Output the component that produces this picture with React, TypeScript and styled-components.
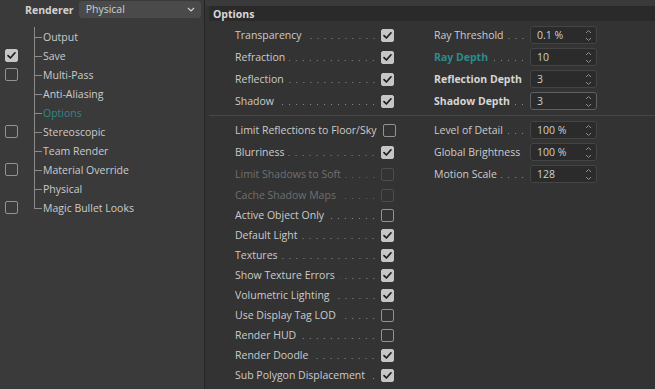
import React from 'react';
import styled, { createGlobalStyle } from 'styled-components';

const Global = createGlobalStyle`
  html, body { margin: 0; padding: 0; background: #333333; }
  body {
    font-family: "Open Sans", "Noto Sans", "DejaVu Sans", sans-serif;
    font-size: 10.5px;
    color: #cbcbcb;
  }
  * { box-sizing: border-box; }
`;

const Window = styled.div`
  width: 655px;
  height: 389px;
  display: flex;
  overflow: hidden;
  background: #333333;
`;

/* ---------- Sidebar ---------- */

const Sidebar = styled.aside`
  width: 205px;
  flex-shrink: 0;
  background: #3a3a3a;
  border-right: 1px solid #262626;
  display: flex;
  flex-direction: column;
`;

const RendererBar = styled.div`
  height: 19px;
  flex-shrink: 0;
  display: flex;
  align-items: center;
  padding: 0 0 0 25px;
  gap: 5px;
`;

const BarLabel = styled.span`
  font-weight: 700;
  color: #d2d2d2;
`;

const Dropdown = styled.div`
  width: 122px;
  height: 17px;
  margin-top: -1px;
  border-radius: 3px;
  background: #4a4a4a;
  display: flex;
  align-items: center;
  justify-content: space-between;
  padding: 0 6px 0 7px;
  color: #d0d0d0;
`;

const Tree = styled.ul`
  list-style: none;
  margin: 8px 0 0;
  padding: 0;
  flex-shrink: 0;
`;

const TreeRow = styled.li`
  height: 19px;
  display: grid;
  grid-template-columns: 34px 9px 1fr;
  align-items: center;
`;

const TreeCheckSlot = styled.div`
  padding-left: 5px;
  display: flex;
  align-items: center;
`;

const Connector = styled.div<{ $last?: boolean }>`
  position: relative;
  height: 100%;
  &::before {
    content: "";
    position: absolute;
    left: 0;
    top: 0;
    width: 1px;
    height: ${(p) => (p.$last ? '50%' : '100%')};
    background: #8a8a8a;
  }
  &::after {
    content: "";
    position: absolute;
    left: 0;
    top: 50%;
    width: 8px;
    height: 1px;
    background: #8a8a8a;
  }
`;

const TreeLabel = styled.span<{ $active?: boolean }>`
  color: ${(p) => (p.$active ? '#2f8787' : '#cbcbcb')};
  white-space: nowrap;
`;

/* ---------- Checkbox ---------- */

const Box = styled.span<{ $checked?: boolean; $disabled?: boolean }>`
  width: 13px;
  height: 13px;
  flex-shrink: 0;
  border-radius: 2px;
  display: inline-flex;
  align-items: center;
  justify-content: center;
  background: ${(p) => (p.$checked ? '#c6c6c6' : 'transparent')};
  border: 1px solid
    ${(p) => (p.$checked ? '#c6c6c6' : p.$disabled ? '#4e4e4e' : '#929292')};
`;

const Checkbox = ({ checked, disabled }: { checked?: boolean; disabled?: boolean }) => (
  <Box $checked={checked} $disabled={disabled}>
    {checked && (
      <svg width="11" height="11" viewBox="0 0 11 11">
        <path d="M2 5.6 L4.4 8 L9 2.8" fill="none" stroke="#1c1c1c" strokeWidth="1.7" strokeLinecap="round" strokeLinejoin="round" />
      </svg>
    )}
  </Box>
);

/* ---------- Main ---------- */

const Main = styled.main`
  flex: 1;
  min-width: 0;
  display: flex;
  flex-direction: column;
  padding-left: 4px;
  & > * { flex-shrink: 0; }
`;

const TopStrip = styled.div`
  height: 6px;
  margin-left: -4px;
  background: #3a3a3a;
`;

const GroupHeader = styled.div`
  height: 15px;
  background: #2a2a2a;
  display: flex;
  align-items: center;
  padding-left: 4px;
  font-weight: 700;
  color: #d8d8d8;
`;

const Section = styled.section<{ $divided?: boolean; $tallRows: number }>`
  display: grid;
  grid-template-columns: 159px 163px;
  grid-template-rows: repeat(${(p) => p.$tallRows}, 22px);
  grid-auto-rows: 20px;
  column-gap: 40px;
  padding: 3px 0 3px 26px;
  border-top: ${(p) => (p.$divided ? '1px solid #474747' : 'none')};
`;

const Cell = styled.div`
  display: flex;
  align-items: center;
  min-width: 0;
`;

const Label = styled.span<{ $tone?: 'normal' | 'dim' | 'bold' | 'accent' }>`
  white-space: nowrap;
  font-weight: ${(p) => (p.$tone === 'bold' || p.$tone === 'accent' ? 700 : 400)};
  color: ${(p) =>
    p.$tone === 'dim'
      ? '#707070'
      : p.$tone === 'accent'
      ? '#2b8c8c'
      : p.$tone === 'bold'
      ? '#d6d6d6'
      : '#cbcbcb'};
`;

const Leader = styled.span<{ $dim?: boolean }>`
  flex: 1;
  min-width: 0;
  height: 1px;
  margin: 6px 6px 0 0;
  background-image: linear-gradient(
    to right,
    ${(p) => (p.$dim ? '#686868' : '#8c8c8c')} 1px,
    transparent 1px
  );
  background-size: 7px 1px;
  background-repeat: repeat-x;
  background-position: right 2px center;
  mask-image: linear-gradient(to right, transparent 4px, #000 4px);
  -webkit-mask-image: linear-gradient(to right, transparent 4px, #000 4px);
`;

const Field = styled.div<{ $focused?: boolean }>`
  width: 67px;
  height: 18px;
  flex-shrink: 0;
  border-radius: 3px;
  background: #2b2b2b;
  border: 1px solid ${(p) => (p.$focused ? '#606060' : '#444444')};
  display: flex;
  align-items: center;
  justify-content: space-between;
  padding: 0 4px 0 6px;
  color: #cfcfcf;
`;

const Spinner = () => (
  <svg width="7" height="13" viewBox="0 0 7 13">
    <path d="M1 4 L3.5 1.5 L6 4" fill="none" stroke="#8f8f8f" strokeWidth="1" />
    <path d="M1 9 L3.5 11.5 L6 9" fill="none" stroke="#8f8f8f" strokeWidth="1" />
  </svg>
);

type Check = { label: string; checked?: boolean; disabled?: boolean };
type Num = { label: string; value: string; tone?: 'normal' | 'bold' | 'accent'; focused?: boolean };

const CheckItem = ({ item }: { item: Check }) => (
  <Cell>
    <Label $tone={item.disabled ? 'dim' : 'normal'}>{item.label}</Label>
    <Leader $dim={item.disabled} />
    <Checkbox checked={item.checked} disabled={item.disabled} />
  </Cell>
);

const NumItem = ({ item }: { item?: Num }) =>
  item ? (
    <Cell>
      <Label $tone={item.tone}>{item.label}</Label>
      <Leader />
      <Field $focused={item.focused}>
        <span>{item.value}</span>
        <Spinner />
      </Field>
    </Cell>
  ) : (
    <Cell />
  );

const tree = [
  { label: 'Output', box: false },
  { label: 'Save', box: true, checked: true },
  { label: 'Multi-Pass', box: true },
  { label: 'Anti-Aliasing', box: false },
  { label: 'Options', box: false, active: true },
  { label: 'Stereoscopic', box: true },
  { label: 'Team Render', box: false },
  { label: 'Material Override', box: true },
  { label: 'Physical', box: false },
  { label: 'Magic Bullet Looks', box: true },
];

const section1: [Check, Num][] = [
  [{ label: 'Transparency', checked: true }, { label: 'Ray Threshold', value: '0.1 %' }],
  [{ label: 'Refraction', checked: true }, { label: 'Ray Depth', value: '10', tone: 'accent' }],
  [{ label: 'Reflection', checked: true }, { label: 'Reflection Depth', value: '3', tone: 'bold' }],
  [{ label: 'Shadow', checked: true }, { label: 'Shadow Depth', value: '3', tone: 'bold', focused: true }],
];

const section2: [Check, Num?][] = [
  [{ label: 'Limit Reflections to Floor/Sky' }, { label: 'Level of Detail', value: '100 %' }],
  [{ label: 'Blurriness', checked: true }, { label: 'Global Brightness', value: '100 %' }],
  [{ label: 'Limit Shadows to Soft', disabled: true }, { label: 'Motion Scale', value: '128' }],
  [{ label: 'Cache Shadow Maps', disabled: true }],
  [{ label: 'Active Object Only' }],
  [{ label: 'Default Light', checked: true }],
  [{ label: 'Textures', checked: true }],
  [{ label: 'Show Texture Errors', checked: true }],
  [{ label: 'Volumetric Lighting', checked: true }],
  [{ label: 'Use Display Tag LOD' }],
  [{ label: 'Render HUD' }],
  [{ label: 'Render Doodle', checked: true }],
  [{ label: 'Sub Polygon Displacement', checked: true }],
  [{ label: 'Post Effects', checked: true }],
];

export default function App() {
  return (
    <>
      <Global />
      <Window>
        <Sidebar>
          <RendererBar>
            <BarLabel>Renderer</BarLabel>
            <Dropdown>
              <span>Physical</span>
              <svg width="8" height="5" viewBox="0 0 8 5">
                <path d="M1 1 L4 4 L7 1" fill="none" stroke="#d0d0d0" strokeWidth="1.2" />
              </svg>
            </Dropdown>
          </RendererBar>
          <Tree>
            {tree.map((t, i) => (
              <TreeRow key={t.label}>
                <TreeCheckSlot>{t.box && <Checkbox checked={t.checked} />}</TreeCheckSlot>
                <Connector $last={i === tree.length - 1} />
                <TreeLabel $active={t.active}>{t.label}</TreeLabel>
              </TreeRow>
            ))}
          </Tree>
        </Sidebar>
        <Main>
          <TopStrip />
          <GroupHeader>Options</GroupHeader>
          <Section $tallRows={4}>
            {section1.map(([c, n]) => (
              <React.Fragment key={c.label}>
                <CheckItem item={c} />
                <NumItem item={n} />
              </React.Fragment>
            ))}
          </Section>
          <Section $divided $tallRows={3}>
            {section2.map(([c, n]) => (
              <React.Fragment key={c.label}>
                <CheckItem item={c} />
                <NumItem item={n} />
              </React.Fragment>
            ))}
          </Section>
        </Main>
      </Window>
    </>
  );
}
